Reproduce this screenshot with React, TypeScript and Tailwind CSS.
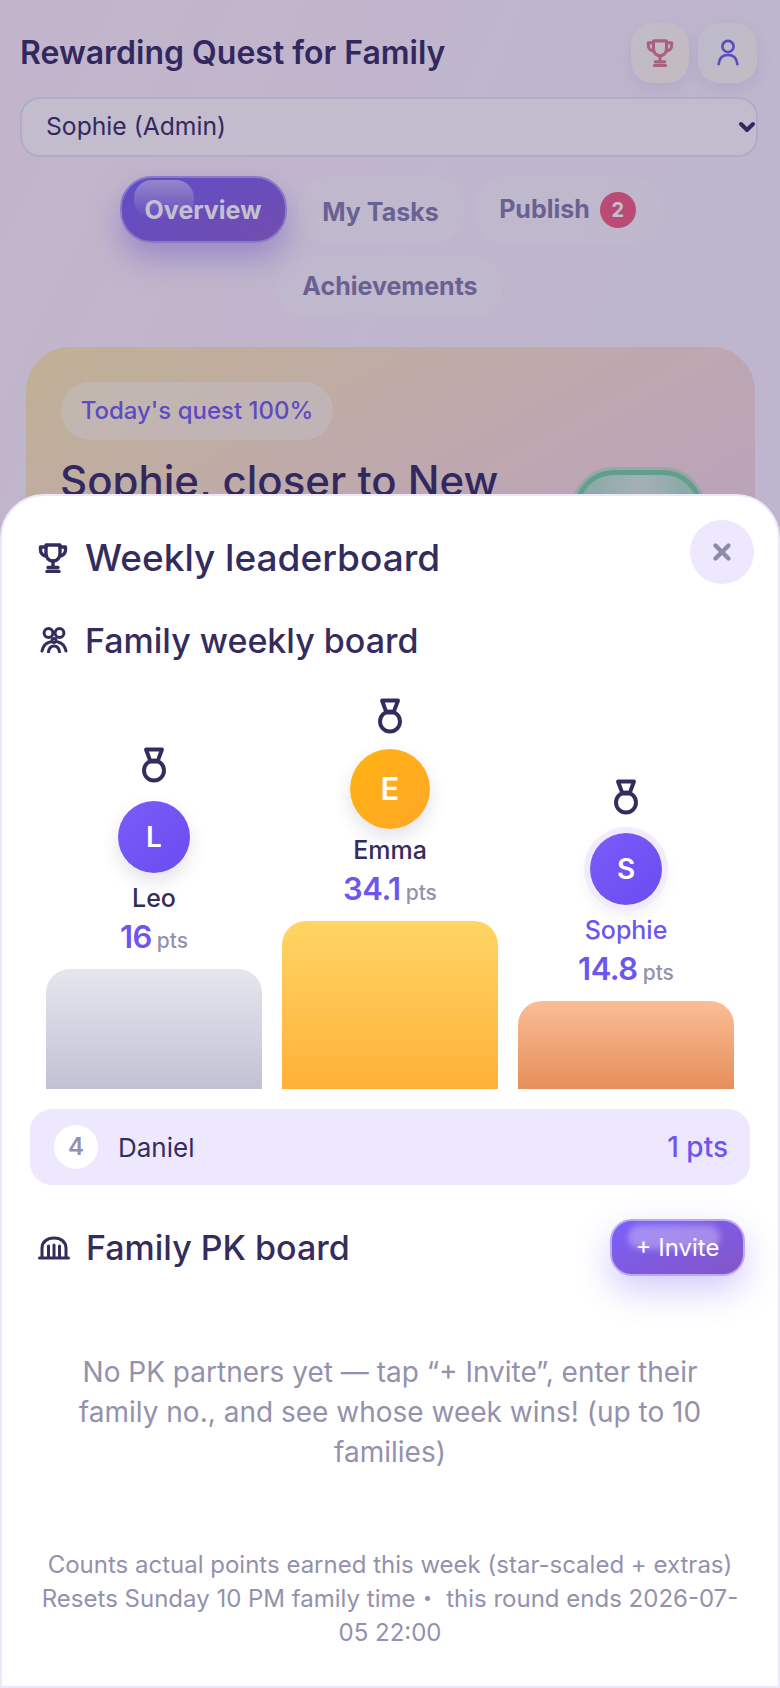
import { ChevronDown, X } from "lucide-react";

const font = "font-['Inter','Noto_Sans_CJK_SC',sans-serif]";

function TrophyIcon({ className }: { className: string }) {
  return (
    <svg viewBox="0 0 30 30" fill="none" stroke="currentColor" strokeWidth="3.400" strokeLinecap="round" strokeLinejoin="round" className={className}>
      <path d="M8 2h14v9a7 7 0 0 1-14 0V2Z" />
      <path d="M8 4H2.500v3a6 6 0 0 0 6 6M22 4h5.500v3a6 6 0 0 1-6 6" />
      <path d="M15 18v6" />
      <path d="M10 24.500h10M9 28.500h12" />
    </svg>
  );
}

function UserIcon({ className }: { className: string }) {
  return (
    <svg viewBox="0 0 24 30" fill="none" stroke="currentColor" strokeWidth="2.800" strokeLinecap="round" className={className}>
      <circle cx="12" cy="8" r="6" />
      <path d="M2 27c.6-6.500 4.500-10 10-10s9.400 3.500 10 10" />
    </svg>
  );
}

function FamilyIcon() {
  return (
    <svg viewBox="0 0 28 26" fill="none" stroke="currentColor" strokeWidth="3" strokeLinecap="round" className="h-[26px] w-[28px] text-[#352c5e]">
      <circle cx="8.500" cy="6" r="4.400" />
      <circle cx="19.500" cy="6" r="4.400" />
      <circle cx="14" cy="13.500" r="2" />
      <path d="M2 24c1-4.500 3.500-8 8-9M26 24c-1-4.500-3.500-8-8-9M8.500 25c.5-3.500 2.500-6 5.500-6s5 2.500 5.500 6" />
    </svg>
  );
}

function BankIcon() {
  return (
    <svg viewBox="0 0 32 24" fill="none" stroke="currentColor" strokeWidth="3" strokeLinecap="round" className="h-[24px] w-[32px] text-[#352c5e]">
      <path d="M4 21V12C4 6 9 2 16 2s12 4 12 10v9" />
      <path d="M10.500 10v11M16 9v12M21.500 10v11M1.500 22h29" />
    </svg>
  );
}

function MedalIcon() {
  return (
    <svg viewBox="0 0 24 36" fill="none" stroke="#352c5e" strokeWidth="3.900" strokeLinejoin="round" className="h-[36px] w-[24px]">
      <circle cx="12" cy="23.500" r="10" />
      <path d="M4 2.500h16l-4.500 12h-7L4 2.500Z" />
    </svg>
  );
}

const podium = [
  {
    name: "Leo",
    initial: "L",
    points: "16",
    medalGap: "mb-[18px]",
    avatar: "h-[72px] w-[72px] bg-gradient-to-br from-[#7a5cfa] to-[#6a4cf0] text-[28px] shadow-[0_8px_18px_rgba(60,50,110,0.14)]",
    nameColor: "text-[#352c5e]",
    nameGap: "mt-[9px]",
    bar: "h-[120px] bg-gradient-to-b from-[#e6e6ef] to-[#c2c1d4]",
  },
  {
    name: "Emma",
    initial: "E",
    points: "34.1",
    medalGap: "mb-[15px]",
    avatar: "h-[80px] w-[80px] bg-gradient-to-br from-[#ffb30f] to-[#ffa726] text-[31px] shadow-[0_8px_18px_rgba(60,50,110,0.14)]",
    nameColor: "text-[#352c5e]",
    nameGap: "mt-[5px]",
    bar: "h-[168px] bg-gradient-to-b from-[#ffd564] to-[#ffb136]",
  },
  {
    name: "Sophie",
    initial: "S",
    points: "14.8",
    medalGap: "mb-[18px]",
    avatar: "h-[72px] w-[72px] bg-gradient-to-br from-[#7a5cfa] to-[#6a4cf0] text-[28px] shadow-[0_0_0_6px_#f0ebff,0_8px_18px_rgba(60,50,110,0.1)]",
    nameColor: "text-[#6d56ee]",
    nameGap: "mt-[9px]",
    bar: "h-[88px] bg-gradient-to-b from-[#fbbd96] to-[#e58f5a]",
  },
];

export default function App() {
  return (
    <div className={`relative h-[1688px] w-[780px] overflow-hidden bg-gradient-to-br from-[#fdeefa] via-[#f6effc] to-[#f1eefd] ${font}`}>
      <div className="px-5 pt-[23px]">
        <div className="flex items-center justify-between">
          <h1 className="text-[32px] font-semibold text-[#2f2560]">Rewarding Quest for Family</h1>
          <div className="mr-[3px] flex gap-[9px]">
            <div className="flex h-[60px] w-[58px] items-center justify-center rounded-[22px] bg-gradient-to-br from-[#fbf6f8] to-[#fdf8e8] shadow-[0_6px_16px_rgba(120,100,220,0.12)]">
              <TrophyIcon className="h-[28px] w-[28px] text-[#d9788c]" />
            </div>
            <div className="flex h-[60px] w-[59px] items-center justify-center rounded-[22px] bg-gradient-to-br from-[#f4f4fb] to-[#fbf9ee] shadow-[0_6px_16px_rgba(120,100,220,0.12)]">
              <UserIcon className="h-[28px] w-[24px] text-[#6a56e8]" />
            </div>
          </div>
        </div>
        <div className="relative mt-[14px] w-[738px]">
          <select
            defaultValue="sophie"
            className="h-[60px] w-full appearance-none rounded-[20px] border-2 border-[#e4e0f8] bg-white/60 pl-[24px] text-[24.700px] text-[#2f2560]"
          >
            <option value="sophie">Sophie (Admin)</option>
          </select>
          <ChevronDown size={24} strokeWidth={4} className="pointer-events-none absolute right-[-1px] top-[18px] text-[#2f2560]" />
        </div>
        <div className="mt-[19px] flex flex-wrap justify-center gap-x-[11px] gap-y-[12px]">
          <div className="relative flex h-[67px] w-[167px] items-center justify-center overflow-visible rounded-[32px] border-2 border-[#a99af3] bg-gradient-to-br from-[#7057f6] to-[#8a5ad0] pt-[2px] text-[25px] font-bold text-white shadow-[0_16px_30px_rgba(100,70,230,0.35)]">
            <span className="absolute left-[12px] top-[2px] h-[38px] w-[60px] rounded-[18px] bg-gradient-to-b from-white/50 to-white/0" />
            <span className="relative">Overview</span>
          </div>
          <div className="flex h-[68px] w-[166px] items-center justify-center rounded-[32px] bg-white/25 pt-[6px] text-[25px] font-bold text-[#7d76a8]">
            My Tasks
          </div>
          <div className="flex h-[68px] w-[186px] items-center justify-center gap-[10px] rounded-[32px] bg-white/25 text-[25px] font-bold text-[#7d76a8]">
            Publish
            <span className="flex h-[36px] w-[36px] items-center justify-center rounded-full bg-[#f2557f] text-[20px] text-white">2</span>
          </div>
          <div className="flex h-[62px] w-[226px] items-center justify-center rounded-[32px] bg-white/25 text-[25px] font-bold text-[#7d76a8]">
            Achievements
          </div>
        </div>
        <div className="ml-[6px] mt-[29px] h-[400px] w-[729px] rounded-[44px] bg-gradient-to-br from-[#fbe8aa] via-[#f6dad6] to-[#ecccf2] pl-[34px] pr-[52px] pt-[35px]">
          <div className="ml-px flex h-[58px] w-[272px] items-center justify-center rounded-[29px] bg-white/40 text-[24px] font-medium text-[#6d56ee]">
            Today's quest 100%
          </div>
          <div className="mt-[14px] flex justify-between">
            <h2 className="text-[42px] font-[550] leading-[54px] text-[#2f2560]">Sophie, closer to New</h2>
            <div className="mt-[16px] h-[110px] w-[129px] rounded-[40px] border-[5px] border-[#6fcf9f] bg-gradient-to-r from-[#a5dcc4] via-[#d3e6da] to-[#a5dcc4] shadow-[0_0_0_3px_rgba(140,215,175,0.5)]" />
          </div>
        </div>
      </div>

      <div className="absolute inset-0 bg-[#3a3160]/30" />

      <div className="absolute inset-x-0 bottom-0 h-[1194px] rounded-t-[44px] border-2 border-[#ece8fb] bg-white px-[28px] pt-[24px]">
        <div className="flex items-start justify-between">
          <div className="ml-2 mt-[14px] flex h-[48px] items-center gap-[17px]">
            <TrophyIcon className="h-[30px] w-[30px] text-[#352c5e]" />
            <h2 className="text-[37px] font-[550] text-[#352c5e]">Weekly leaderboard</h2>
          </div>
          <button className="mr-[-4px] flex h-[64px] w-[64px] items-center justify-center rounded-full bg-[#ede8fd] text-[#8f8ba8]">
            <X size={26} strokeWidth={4} />
          </button>
        </div>

        <div className="ml-[10px] mt-[34px] flex h-[44px] items-center gap-[17px]">
          <FamilyIcon />
          <h3 className="text-[34px] font-[550] text-[#352c5e]">Family weekly board</h3>
        </div>

        <div className="mt-[36px] flex items-end gap-5 px-4">
          {podium.map((p) => (
            <div key={p.name} className="flex w-[216px] flex-col items-center">
              <div className={`flex ${p.medalGap}`}>
                <MedalIcon />
              </div>
              <div className={`flex items-center justify-center rounded-full font-semibold text-white ${p.avatar}`}>{p.initial}</div>
              <div className={`${p.nameGap} text-[25px] font-[550] leading-[32px] ${p.nameColor}`}>{p.name}</div>
              <div className="mb-[8px] mt-[3px] flex items-baseline gap-[5px] leading-[40px]">
                <span className="text-[31px] font-semibold tracking-[-0.5px] text-[#6d56ee]">{p.points}</span>
                <span className="text-[21px] font-medium text-[#9491ad]">pts</span>
              </div>
              <div className={`w-full rounded-t-[24px] ${p.bar}`} />
            </div>
          ))}
        </div>

        <div className="mt-5 flex h-[76px] items-center justify-between rounded-[22px] bg-[#ede8fd] pl-[24px] pr-[22px]">
          <div className="flex items-center gap-5">
            <div className="flex h-[44px] w-[44px] items-center justify-center rounded-full bg-white text-[24px] font-semibold text-[#9491ad]">4</div>
            <span className="text-[26px] text-[#352c5e]">Daniel</span>
          </div>
          <span className="text-[28px] font-[550] text-[#6d56ee]">1 pts</span>
        </div>

        <div className="mt-[34px] flex h-[57px] items-center justify-between">
          <div className="ml-2 flex items-center gap-[16px]">
            <BankIcon />
            <h3 className="text-[34px] font-[550] text-[#352c5e]">Family PK board</h3>
          </div>
          <button className="relative mr-[5px] flex h-[57px] w-[135px] items-center justify-center overflow-visible rounded-[22px] border-2 border-[#b9a9f6] bg-gradient-to-br from-[#7a5ffa] to-[#8455c6] text-[24px] font-normal text-white shadow-[0_14px_34px_rgba(109,86,238,0.3)]">
            <span className="absolute left-[16px] top-[4px] h-[24px] w-[92px] rounded-[14px] bg-white/30 blur-[3px]" />
            <span className="relative">+ Invite</span>
          </button>
        </div>

        <p className="mx-auto mt-[76px] w-[660px] text-center text-[28px] leading-[40px] text-[#9491ad]">
          No PK partners yet — tap “+ Invite”, enter their family no., and see whose week wins! (up to 10 families)
        </p>

        <p className="mt-[76px] text-center text-[24px] leading-[34px] text-[#9491ad]">
          Counts actual points earned this week (star-scaled + extras)
          <br />
          Resets Sunday 10 PM family time・ this round ends 2026-07-05 22:00
        </p>
      </div>
    </div>
  );
}
